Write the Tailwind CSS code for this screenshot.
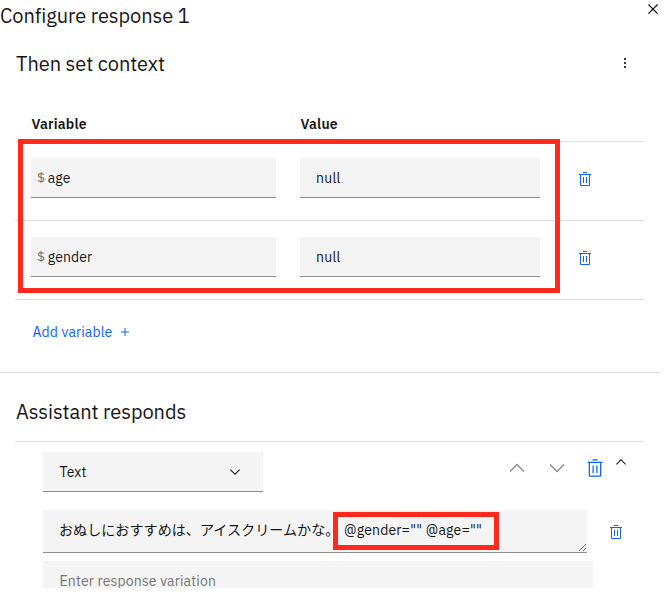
<!DOCTYPE html>
<html lang="en">
<head>
<meta charset="utf-8">
<title>Configure response</title>
<script src="https://cdn.jsdelivr.net/npm/@tailwindcss/browser@4"></script>
</head>
<body class="bg-white">
<svg class="hidden">
  <symbol id="trash" viewBox="0 0 32 32"><path d="M12 12h2v12h-2zM18 12h2v12h-2zM4 6v2h2v20a2 2 0 0 0 2 2h16a2 2 0 0 0 2-2V8h2V6zM8 28V8h16v20zM12 2h8v2h-8z"/></symbol>
  <symbol id="down" viewBox="0 0 16 16"><path d="M8 11 3 6l.7-.7L8 9.6l4.3-4.3.7.7z"/></symbol>
  <symbol id="up" viewBox="0 0 16 16"><path d="m8 5 5 5-.7.7L8 6.4l-4.3 4.3L3 10z"/></symbol>
</svg>
<main class="relative flex h-[608px] w-[666px] flex-col overflow-hidden font-['IBM_Plex_Sans','Open_Sans','Noto_Sans_CJK_JP',sans-serif] text-sm tracking-[0.12px] text-[#161616]">
  <header class="flex h-[30px] items-start justify-between pr-[5px]">
    <h1 class="text-[20px] leading-[32px] tracking-[-0.05px] whitespace-nowrap"><span>Configure response 1</span></h1>
    <svg class="mt-px size-4" viewBox="0 0 16 16" fill="#161616"><path d="m12 4.7-.7-.7L8 7.3 4.7 4l-.7.7L7.3 8 4 11.3l.7.7L8 8.7l3.3 3.3.7-.7L8.7 8z" transform="translate(-2 -2) scale(1.25)"/></svg>
  </header>
  <section class="h-[342px] w-[661px] pl-[15px]">
    <div class="flex h-[66px] items-center justify-between pr-7 pl-px">
      <h2 class="pt-[2px] text-[20px] leading-[30px] tracking-[-0.05px] whitespace-nowrap"><span>Then set context</span></h2>
      <svg class="size-4" viewBox="0 0 16 16" fill="#393939" shape-rendering="crispEdges"><path d="M7 3h2v2H7zM7 7h2v2H7zM7 11h2v2H7z"/></svg>
    </div>
    <div class="w-[630px]">
      <div class="grid h-[46px] grid-cols-[269px_1fr] items-start border-b border-[#e0e0e0] pt-[18px] pl-[16.5px] text-[14px] leading-5 font-semibold">
        <div><span class="tracking-[0.18px]">Variable</span></div><div><span class="tracking-[0.18px]">Value</span></div>
      </div>
      <div class="flex h-[79px] items-start border-b border-[#e0e0e0] pt-4 pl-4">
        <div class="flex h-10 w-[245px] items-center gap-[2.5px] border-b border-[#8d8d8d] bg-[#f4f4f4] pl-[6px]"><span class="text-[13.5px] text-[#6f6f6f]">$</span><span>age</span></div>
        <div class="ml-6 flex h-10 w-60 items-center border-b border-[#8d8d8d] bg-[#f4f4f4] pl-4"><span class="tracking-[0.3px]">null</span></div>
        <svg class="mt-[13px] ml-[37px] size-4" fill="#0f62fe"><use href="#trash"/></svg>
      </div>
      <div class="flex h-[79px] items-start border-b border-[#e0e0e0] pt-4 pl-4">
        <div class="flex h-10 w-[245px] items-center gap-[2.5px] border-b border-[#8d8d8d] bg-[#f4f4f4] pl-[6px]"><span class="text-[13.5px] text-[#6f6f6f]">$</span><span>gender</span></div>
        <div class="ml-6 flex h-10 w-60 items-center border-b border-[#8d8d8d] bg-[#f4f4f4] pl-4"><span class="tracking-[0.3px]">null</span></div>
        <svg class="mt-[13px] ml-[37px] size-4" fill="#0f62fe"><use href="#trash"/></svg>
      </div>
      <div class="flex h-16 items-center pl-[17.5px] text-[#0f62fe]"><span class="w-[84.5px] whitespace-nowrap"><span>Add variable</span></span>
        <svg class="size-4" viewBox="0 0 16 16" fill="#0f62fe"><path d="M8.5 7.5V4h-1v3.5H4v1h3.5V12h1V8.5H12v-1z"/></svg>
      </div>
    </div>
  </section>
  <section class="h-[216px] w-[661px] border-t border-[#e0e0e0] pl-[15px]">
    <h2 class="h-[68px] pt-6 pl-px text-[20px] leading-[30px] tracking-[-0.05px] whitespace-nowrap"><span>Assistant responds</span></h2>
    <div class="w-[630px] border-t border-[#e0e0e0] pt-[10px] pl-7">
      <div class="flex items-start">
        <div class="flex h-10 w-[220px] items-center justify-between border-b border-[#8d8d8d] bg-[#f4f4f4] pr-5 pl-[16.5px]"><span>Text</span><svg class="size-4" fill="#161616"><use href="#down"/></svg></div>
        <svg class="mt-1 ml-[242px] size-6" fill="#8d8d8d"><use href="#up"/></svg>
        <svg class="mt-1 ml-4 size-6" fill="#8d8d8d"><use href="#down"/></svg>
        <svg class="mt-[6px] ml-4 size-5" fill="#0f62fe"><use href="#trash"/></svg>
        <svg class="mt-[2px] ml-2 size-4" fill="#161616"><use href="#up"/></svg>
      </div>
      <div class="mt-[18px] flex items-start">
        <div class="flex h-[43px] w-[544px] items-end justify-between border-b border-[#8d8d8d] bg-[#f4f4f4] pl-4">
          <div class="flex h-[42px] items-start pt-[10px] leading-5 whitespace-nowrap"><span class="-mt-px w-[285px]"><span lang="ja" class="font-['Noto_Sans_CJK_JP'] text-[14.1px] tracking-normal">おぬしにおすすめは、アイスクリームかな。</span></span><span class="tracking-[0.18px]">@gender="" @age=""</span></div>
          <svg class="size-[9px]" viewBox="0 0 9 9" stroke="#555" stroke-width=".9"><path d="M1 8 8 1M5 8l3-3"/></svg>
        </div>
        <svg class="mt-[14px] ml-[21px] size-4" fill="#0f62fe"><use href="#trash"/></svg>
      </div>
      <div class="mt-2 h-[27px] w-[550px] overflow-hidden bg-[#f4f4f4] pt-[10px] pl-[16.5px] leading-5 whitespace-nowrap text-[#757575]"><span class="tracking-[0.15px]">Enter response variation</span></div>
    </div>
  </section>
  <div class="absolute top-[139px] left-[18px] h-[154px] w-[542px] border-5 border-[#ff2a1c]"></div>
  <div class="absolute top-[512px] left-[333px] h-[38px] w-[166px] border-5 border-[#ff2a1c]"></div>
</main>
</body>
</html>
